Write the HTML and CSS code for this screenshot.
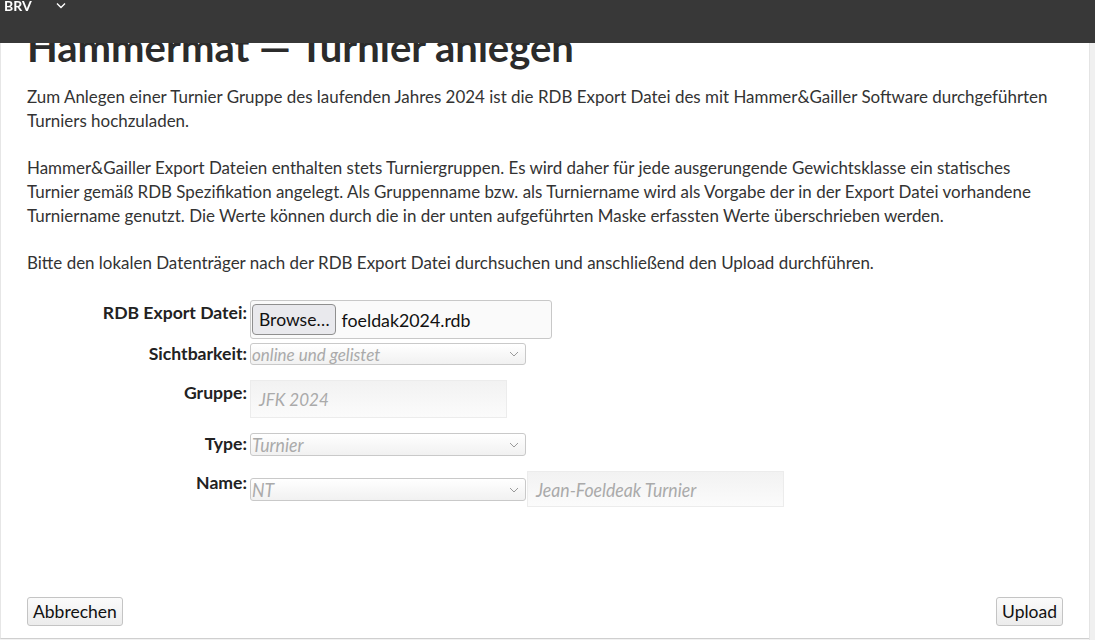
FILE: index.html
```html
<!DOCTYPE html>
<html lang="de">
<head>
<meta charset="utf-8">
<title>Hammermat — Turnier anlegen</title>
<link rel="stylesheet" href="styles.css">
</head>
<body>
<header class="topbar">
  <span class="brand">BRV</span>
  <svg class="chev" width="10" height="7" viewBox="0 0 10 7"><path d="M1 1.5 L5 5.5 L9 1.5" fill="none" stroke="#fff" stroke-width="1.4"/></svg>
</header>
<div class="page">
  <main class="card">
    <h1 class="title">Hammermat — Turnier anlegen</h1>
    <p class="text">Zum Anlegen einer Turnier Gruppe des laufenden Jahres 2024 ist die RDB Export Datei des mit Hammer&amp;Gailler Software durchgeführten Turniers hochzuladen.</p>
    <p class="text">Hammer&amp;Gailler Export Dateien enthalten stets Turniergruppen. Es wird daher für jede ausgerungende Gewichtsklasse ein statisches Turnier gemäß RDB Spezifikation angelegt. Als Gruppenname bzw. als Turniername wird als Vorgabe der in der Export Datei vorhandene Turniername genutzt. Die Werte können durch die in der unten aufgeführten Maske erfassten Werte überschrieben werden.</p>
    <p class="text">Bitte den lokalen Datenträger nach der RDB Export Datei durchsuchen und anschließend den Upload durchführen.</p>

    <form class="form">
      <div class="row row-file">
        <label class="lbl">RDB Export Datei:</label>
        <div class="file">
          <span class="browse">Browse…</span>
          <span class="fname">foeldak2024.rdb</span>
        </div>
      </div>
      <div class="row row-sicht">
        <label class="lbl">Sichtbarkeit:</label>
        <div class="sel w274"><span>online und gelistet</span><svg width="10" height="6" viewBox="0 0 10 6"><path d="M1 1 L5 5 L9 1" fill="none" stroke="#9a9a9a" stroke-width="1"/></svg></div>
      </div>
      <div class="row row-gruppe">
        <label class="lbl">Gruppe:</label>
        <div class="inp w257">JFK 2024</div>
      </div>
      <div class="row row-type">
        <label class="lbl">Type:</label>
        <div class="sel w274 tall"><span class="narrow">Turnier</span><svg width="10" height="6" viewBox="0 0 10 6"><path d="M1 1 L5 5 L9 1" fill="none" stroke="#9a9a9a" stroke-width="1"/></svg></div>
      </div>
      <div class="row row-name">
        <label class="lbl">Name:</label>
        <div class="sel w274 tall nt"><span class="narrow">NT</span><svg width="10" height="6" viewBox="0 0 10 6"><path d="M1 1 L5 5 L9 1" fill="none" stroke="#9a9a9a" stroke-width="1"/></svg></div>
        <div class="inp w257 short"><span class="narrow">Jean-Foeldeak Turnier</span></div>
      </div>
    </form>

    <div class="actions">
      <button type="button" class="btn">Abbrechen</button>
      <button type="button" class="btn">Upload</button>
    </div>
  </main>
  <div class="rail"></div>
</div>
</body>
</html>
```
FILE: styles.css
```css
html, body {
  margin: 0;
  padding: 0;
}
body {
  font-family: Lato, "Open Sans", sans-serif;
  color: #333;
  background: #f2f2f2;
  width: 1095px;
  height: 640px;
  overflow: hidden;
}
.topbar {
  position: fixed;
  top: 0;
  left: 0;
  right: 0;
  height: 43px;
  background: #383838;
  display: flex;
  align-items: flex-start;
  z-index: 5;
}
.brand {
  color: #fff;
  font-weight: 700;
  font-size: 14px;
  line-height: 14px;
  margin: 0 0 0 4px;
  position: relative;
  top: -1px;
}
.chev {
  margin-left: 24px;
  margin-top: 2px;
}
.page {
  display: flex;
  height: 640px;
}
.card {
  box-sizing: border-box;
  width: 1089px;
  height: 639px;
  background: #fff;
  border-left: 1px solid #e6e6e6;
  border-bottom: 1px solid #cfcfcf;
  padding: 23px 26px 0 26px;
  flex: none;
}
.rail {
  width: 6px;
  background: #f0f0f0;
  border-left: 1px solid #e4e4e4;
  height: 640px;
}
.title {
  font-size: 40px;
  font-weight: 700;
  line-height: 48px;
  margin: 0 0 14px 0;
  color: #2b2b2b;
}
.text {
  font-size: 16.95px;
  line-height: 24px;
  margin: 0 0 23px 0;
  color: #333;
}
.form {
  margin-top: 25px;
}
.row {
  display: flex;
  align-items: flex-start;
  gap: 3px;
}
.lbl {
  width: 220px;
  flex: none;
  text-align: right;
  font-weight: 700;
  font-size: 17.6px;
  line-height: 20px;
  color: #222;
}
.row-file .lbl { padding-top: 3px; }
.row-sicht { margin-top: 4px; }
.row-sicht .lbl { padding-top: 1px; }
.row-gruppe { margin-top: 15px; }
.row-gruppe .lbl { padding-top: 3px; }
.row-type { margin-top: 15px; }
.row-type .lbl { padding-top: 1px; }
.row-name { margin-top: 15px; gap: 0; }
.row-name .lbl { padding-top: 2px; margin-right: 3px; }

.file {
  width: 299px;
  height: 37px;
  border: 1px solid #c8c8c8;
  border-radius: 3px;
  background: #fafafa;
  display: flex;
  align-items: center;
  padding-left: 1px;
  gap: 6px;
}
.browse {
  height: 31px;
  box-sizing: border-box;
  padding: 0 5px 0 6px;
  display: flex;
  align-items: center;
  border: 1px solid #8f8f8f;
  border-radius: 4px;
  background: #e9e9ed;
  font-size: 17.5px;
  color: #111;
}
.fname {
  font-size: 17.8px;
  color: #111;
}
.sel {
  height: 20px;
  border: 1px solid #c9c9c9;
  border-radius: 3px;
  background: linear-gradient(#ffffff, #f1f1f1);
  display: flex;
  align-items: center;
  justify-content: space-between;
  padding: 0 6px 0 1px;
  box-sizing: content-box;
  font-style: italic;
  font-size: 17px;
  color: #aaa;
  overflow: hidden;
}
.sel.w274 { width: 267px; }
.sel.tall { height: 21px; }
.sel.nt { margin-top: 7px; }
.narrow {
  display: inline-block;
  font-size: 19px;
  transform: scaleX(0.93);
  transform-origin: left center;
  white-space: nowrap;
}
.inp {
  height: 36px;
  border: 1px solid #ececec;
  background: linear-gradient(#f2f2f2, #fbfbfb);
  display: flex;
  align-items: center;
  padding-left: 8px;
  font-style: italic;
  font-size: 17px;
  color: #aaa;
  box-sizing: content-box;
}
.inp.w257 { width: 247px; }
.inp.short { height: 34px; margin-left: 1px; }
.actions {
  display: flex;
  justify-content: space-between;
  margin-top: 90px;
}
.btn {
  font-family: Lato, "Open Sans", sans-serif;
  font-size: 17.5px;
  color: #111;
  height: 29px;
  padding: 0 5px;
  border: 1px solid #c4c4c4;
  border-radius: 3px;
  background: linear-gradient(#fbfbfb, #ececec);
}
```
